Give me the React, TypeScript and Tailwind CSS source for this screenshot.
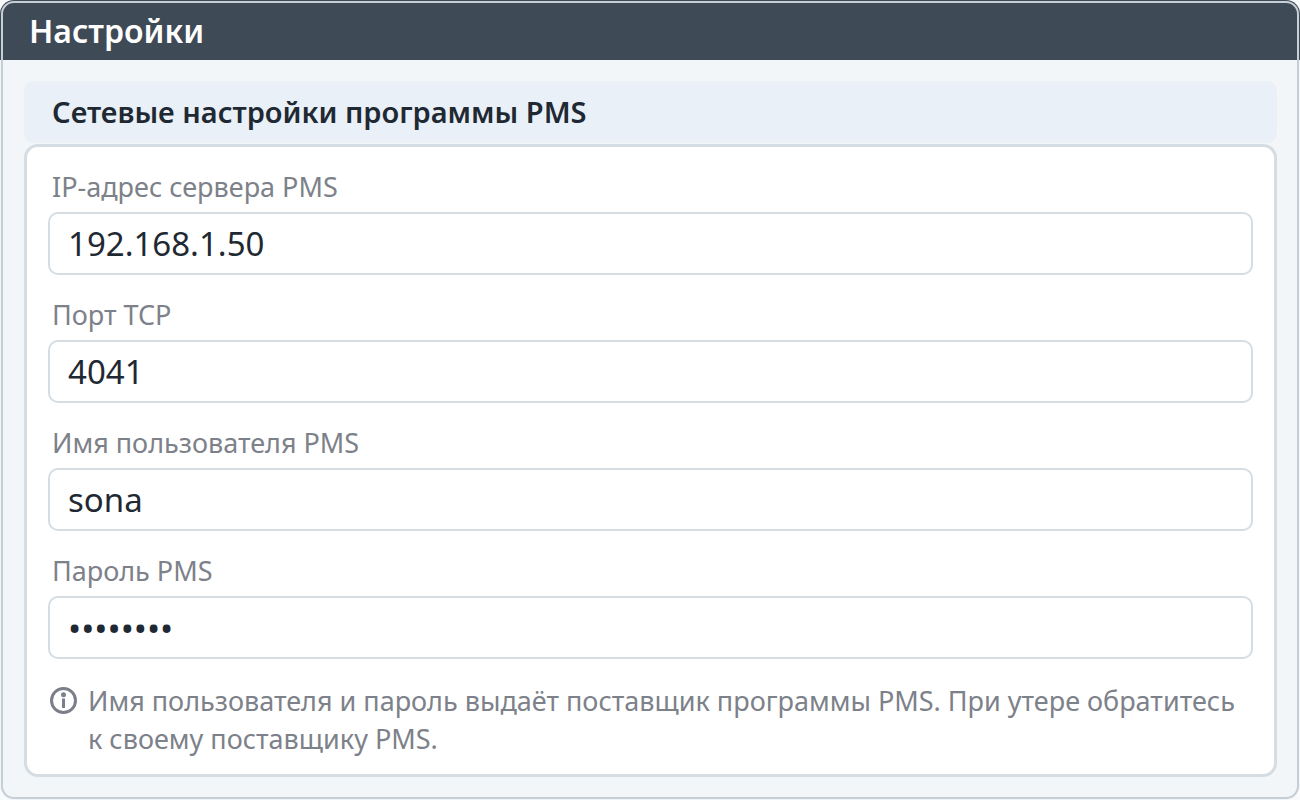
type Field = {
  id: string;
  label: string;
  value: string;
  type: "text" | "password";
};

const fields: Field[] = [
  { id: "pms-ip", label: "IP-адрес сервера PMS", value: "192.168.1.50", type: "text" },
  { id: "pms-port", label: "Порт TCP", value: "4041", type: "text" },
  { id: "pms-user", label: "Имя пользователя PMS", value: "sona", type: "text" },
  { id: "pms-password", label: "Пароль PMS", value: "password", type: "password" },
];

function InfoIcon() {
  return (
    <svg
      viewBox="0 0 28 28"
      className="mt-1 h-7 w-7 shrink-0 text-[#7b7f89]"
      fill="none"
      stroke="currentColor"
      aria-hidden="true"
    >
      <circle cx="14.5" cy="14.5" r="12" strokeWidth="3" />
      <circle cx="14.5" cy="8.8" r="2.5" fill="currentColor" stroke="none" />
      <path d="M14.5 12.5V22" strokeWidth="3" />
    </svg>
  );
}

function TextField({ id, label, value, type }: Field) {
  return (
    <div className="flex flex-col pt-[22px]">
      <label htmlFor={id} className="mb-[7px] px-1 text-[27px] leading-9 text-[#7d8189]">
        {label}
      </label>
      <input
        id={id}
        type={type}
        defaultValue={value}
        autoComplete="off"
        className={
          "h-[63px] w-full rounded-[10px] border-2 border-[#d5dce2] bg-white px-[18px] text-[#1f2933] outline-none focus:border-[#9aa7ba] " +
          (type === "password" ? "text-[35px]" : "text-[33px]")
        }
      />
    </div>
  );
}

export default function App() {
  return (
    <div className="min-h-screen bg-[#f8fafc] font-['Noto_Sans',sans-serif]">
      <div className="flex min-h-screen flex-col overflow-hidden rounded-[14px] bg-[#f3f6f8] outline-2 -outline-offset-3 outline-[#c6ced6]">
        <header className="flex h-[60px] items-center bg-[#3f4a57] px-[29px] pt-px">
          <h1 className="text-[32px] leading-10 font-semibold text-white">Настройки</h1>
        </header>
        <main className="pt-[21px] pr-[23px] pb-[23px] pl-6">
          <h2 className="mb-px rounded-[10px] bg-[#eaf0f7] px-7 py-[11px] text-[29px] leading-10 font-semibold text-[#1f2933]">
            Сетевые настройки программы PMS
          </h2>
          <section className="rounded-[14px] border-3 border-[#d5dce2] bg-white px-[21px] pb-4">
            {fields.map((field) => (
              <TextField key={field.id} {...field} />
            ))}
            <div className="mt-[23px] flex gap-[11px] pr-4 pl-px">
              <InfoIcon />
              <p className="text-[27px] leading-[38px] text-[#7d8189]">
                Имя пользователя и пароль выдаёт поставщик программы PMS. При утере обратитесь к
                своему поставщику PMS.
              </p>
            </div>
          </section>
        </main>
      </div>
    </div>
  );
}
